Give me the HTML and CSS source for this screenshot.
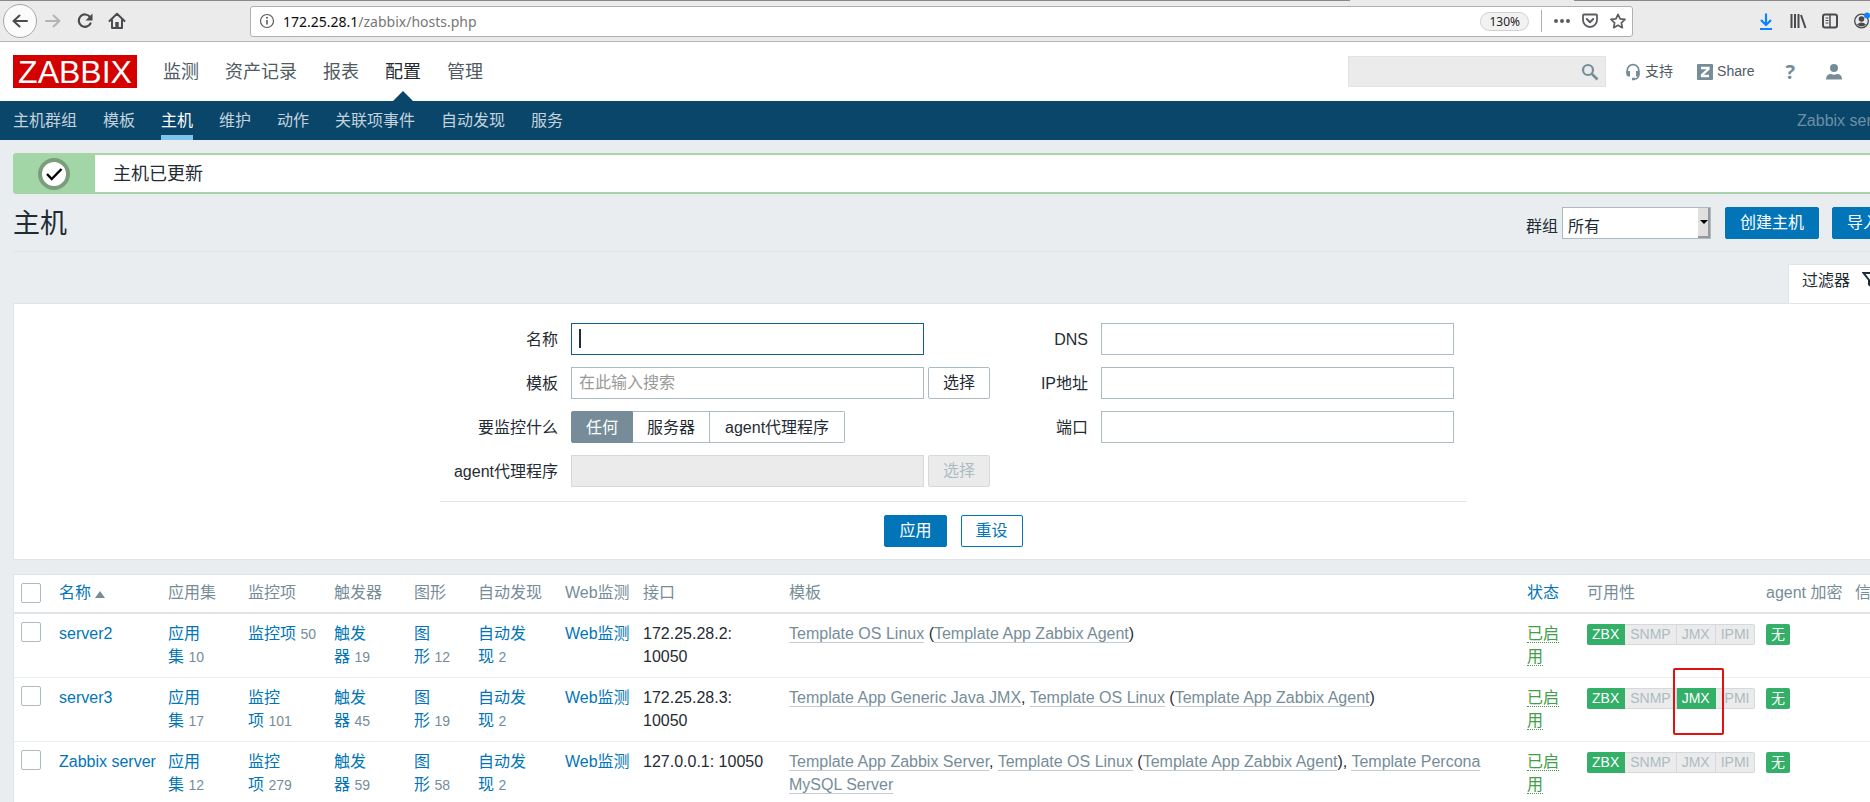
FILE: index.html
```html
<!DOCTYPE html>
<html lang="zh-CN">
<head>
<meta charset="utf-8">
<title>主机</title>
<link rel="stylesheet" href="styles.css">
</head>
<body>
<div class="browser">
  <div class="tab-edge"><span class="edge-dark edge-left"></span><span class="edge-dark edge-right"></span></div>
  <div class="toolbar">
    <button class="tool back" aria-label="Back"><svg width="18" height="18" viewBox="0 0 18 18"><path d="M16 9H2.5M8.500 3.500 2.500 9l6 5.500" fill="none" stroke="#4a4a4f" stroke-width="2" stroke-linecap="round" stroke-linejoin="round"/></svg></button>
    <button class="tool" aria-label="Forward"><svg width="18" height="18" viewBox="0 0 18 18"><path d="M2 9h13.500M9.500 3.500 15.500 9l-6 5.500" fill="none" stroke="#b4b4b6" stroke-width="2" stroke-linecap="round" stroke-linejoin="round"/></svg></button>
    <button class="tool" aria-label="Reload"><svg width="18" height="18" viewBox="0 0 18 18"><path d="M14.500 11.500A6.200 6.200 0 1 1 14 5" fill="none" stroke="#4a4a4f" stroke-width="2.200" stroke-linecap="round"/><path d="M16.500 1.500v7h-7z" fill="#4a4a4f"/></svg></button>
    <button class="tool" aria-label="Home"><svg width="18" height="18" viewBox="0 0 18 18"><path d="M1.500 9 9 1.800 16.500 9M4 8v8h10V8" fill="none" stroke="#4a4a4f" stroke-width="2" stroke-linecap="round" stroke-linejoin="round"/><path d="M7.300 16v-6h3.400v6z" fill="#4a4a4f"/></svg></button>
    <div class="urlbar">
      <svg width="16" height="16" viewBox="0 0 16 16"><circle cx="8" cy="8" r="6.500" fill="none" stroke="#5c5c61" stroke-width="1.200"/><path d="M8 7v4.500" stroke="#5c5c61" stroke-width="1.600"/><circle cx="8" cy="4.700" r="1" fill="#5c5c61"/></svg>
      <span class="url"><b>172.25.28.1</b>/zabbix/hosts.php</span>
      <span class="zoom">130%</span>
      <span class="url-sep"></span>
      <svg width="16" height="16" viewBox="0 0 16 16"><g fill="#5c5c61"><circle cx="2" cy="8" r="2"/><circle cx="8" cy="8" r="2"/><circle cx="14" cy="8" r="2"/></g></svg>
      <svg width="16" height="16" viewBox="0 0 16 16"><path d="M2 1.500h12q1 0 1 1V7a7 7 0 0 1-14 0V2.500q0-1 1-1z" fill="none" stroke="#5c5c61" stroke-width="1.800"/><path d="m4.800 6 3.200 3.200L11.200 6" fill="none" stroke="#5c5c61" stroke-width="2" stroke-linecap="round" stroke-linejoin="round"/></svg>
      <svg width="16" height="16" viewBox="0 0 16 16"><path d="m8 1.300 2.100 4.500 4.900.6-3.600 3.400.9 4.900L8 12.300l-4.300 2.400.9-4.900L1 6.400l4.900-.6z" fill="none" stroke="#5c5c61" stroke-width="1.700" stroke-linejoin="round"/></svg>
    </div>
    <div class="browser-tools">
      <svg width="18" height="18" viewBox="0 0 18 18"><path d="M9 1.500v11M4 8l5 5 5-5M3 17h12" fill="none" stroke="#0a84ff" stroke-width="2.200" stroke-linejoin="round"/></svg>
      <svg width="18" height="18" viewBox="0 0 18 18"><path d="M2.500 2v14M6 2v14M9.500 2v14M12 3l4.500 13" fill="none" stroke="#4a4a4f" stroke-width="2"/></svg>
      <svg width="18" height="18" viewBox="0 0 18 18"><rect x="2" y="2.500" width="14" height="13" rx="2" fill="none" stroke="#4a4a4f" stroke-width="2"/><path d="M9 3v12" stroke="#4a4a4f" stroke-width="1.500"/><path d="M4.500 6h3M4.500 8.500h3M4.500 11h3" stroke="#4a4a4f"/></svg>
      <svg width="18" height="18" viewBox="0 0 18 18"><circle cx="8.500" cy="9" r="6.800" fill="none" stroke="#4a4a4f" stroke-width="1.300"/><circle cx="8.500" cy="7" r="2.800" fill="#4a4a4f"/><path d="M4 12.500q4.500-4 9 0-4.500 4-9 0z" fill="#4a4a4f"/><circle cx="14" cy="3.500" r="3" fill="#0a84ff"/></svg>
    </div>
  </div>
</div>
<div class="page">
  <header class="header">
    <a class="logo" href="#">ZABBIX</a>
    <nav class="main-nav">
      <a href="#">监测</a><a href="#">资产记录</a><a href="#">报表</a><a href="#" class="current">配置</a><a href="#">管理</a>
    </nav>
    <div class="header-tools">
      <form class="search"><input type="search" aria-label="搜索"><button type="button" aria-label="搜索"><svg width="18" height="18" viewBox="0 0 18 18"><circle cx="7" cy="7" r="5" fill="none" stroke="#768d99" stroke-width="2.200"/><path d="m11 11 5.500 5.500" stroke="#768d99" stroke-width="2.600"/></svg></button></form>
      <a class="support" href="#"><svg width="16" height="18" viewBox="0 0 16 18"><path d="M2.200 11V7.500a5.800 5.800 0 0 1 11.600 0V12q-.5 4-4.300 4" fill="none" stroke="#768d99" stroke-width="1.700"/><path d="M1.400 8H5v5.500H3.400q-2 0-2-2zM11 8h3.600v3.500q0 2-2 2H11zM7 14.800h3v2.400H7z" fill="#768d99"/></svg>支持</a>
      <a class="share" href="#"><svg width="16" height="16" viewBox="0 0 16 16"><rect width="16" height="16" rx="1" fill="#768d99"/><path d="M4 4h7.500v1L5 11v1h7" fill="none" stroke="#fff" stroke-width="2.300"/></svg>Share</a>
      <a class="help" href="#" aria-label="帮助">?</a>
      <a class="user" href="#" aria-label="用户"><svg width="16" height="18" viewBox="0 0 16 18"><circle cx="8" cy="4.900" r="4" fill="#768d99"/><path d="M0 16.500q0-5.500 5-5.500 3 1.300 6 0 5 0 5 5.500z" fill="#768d99"/></svg></a>
    </div>
  </header>
  <nav class="sub-nav">
    <a href="#">主机群组</a><a href="#">模板</a><a href="#" class="current">主机</a><a href="#">维护</a><a href="#">动作</a><a href="#">关联项事件</a><a href="#">自动发现</a><a href="#">服务</a>
    <span class="server-name">Zabbix server</span>
  </nav>
  <main>
    <div class="message">
      <span class="message-icon"><svg width="34" height="34" viewBox="0 0 34 34"><circle cx="17" cy="17" r="14" fill="#fff" stroke="#7a9d7c" stroke-width="4"/><path d="m10 17 4.700 5L24.500 12" fill="none" stroke="#000" stroke-width="2.400"/></svg></span>
      <span class="message-text">主机已更新</span>
    </div>
    <div class="title-bar">
      <h1>主机</h1>
      <label for="group">群组</label>
      <span class="select-box"><select id="group"><option>所有</option></select><span class="select-arrow"></span></span>
      <button class="btn primary">创建主机</button>
      <button class="btn primary">导入</button>
    </div>
    <div class="filter-tabs"><button class="filter-tab">过滤器<svg width="18" height="18" viewBox="0 0 18 18"><path d="M1.500 2h15L11 9v7.500l-4-3V9z" fill="none" stroke="#1f2c33" stroke-width="2"/></svg></button></div>
    <form class="filter">
      <div class="filter-body">
        <div class="fields">
          <label for="name">名称</label><div class="control"><input class="text focused" id="name" type="text"><span class="caret"></span></div>
          <label for="tpl">模板</label><div class="control"><input class="text" id="tpl" type="text" placeholder="在此输入搜索"><button type="button" class="btn plain">选择</button></div>
          <span class="label" id="mon">要监控什么</span>
          <div class="segments" role="radiogroup" aria-labelledby="mon">
            <label><input type="radio" name="m" checked>任何</label><label><input type="radio" name="m">服务器</label><label><input type="radio" name="m">agent代理程序</label>
          </div>
          <label for="proxy">agent代理程序</label><div class="control"><input class="text" id="proxy" type="text" disabled><button type="button" class="btn plain" disabled>选择</button></div>
        </div>
        <div class="fields fields-right">
          <label for="dns">DNS</label><input class="text" id="dns" type="text">
          <label for="ip">IP地址</label><input class="text" id="ip" type="text">
          <label for="port">端口</label><input class="text" id="port" type="text">
        </div>
      </div>
      <div class="filter-actions"><button type="button" class="btn primary">应用</button><button type="button" class="btn outline">重设</button></div>
    </form>
    <table class="hosts">
      <colgroup><col class="c-check"><col class="c-name"><col class="c-apps"><col class="c-items"><col class="c-trig"><col class="c-graph"><col class="c-disc"><col class="c-web"><col class="c-intf"><col><col class="c-status"><col class="c-avail"><col class="c-enc"><col class="c-info"></colgroup>
      <thead><tr>
        <th><input type="checkbox" aria-label="全选"></th><th><a href="#">名称 <span class="sort"></span></a></th><th>应用集</th><th>监控项</th><th>触发器</th><th>图形</th><th>自动发现</th><th>Web监测</th><th>接口</th><th>模板</th><th><a href="#">状态</a></th><th>可用性</th><th>agent 加密</th><th>信息</th>
      </tr></thead>
      <tbody>
        <tr>
          <td><input type="checkbox" aria-label="server2"></td><td class="nowrap"><a href="#">server2</a></td>
          <td><a href="#">应用集</a>&nbsp;<small>10</small></td><td><a href="#">监控项</a>&nbsp;<small>50</small></td><td><a href="#">触发器</a>&nbsp;<small>19</small></td><td><a href="#">图形</a>&nbsp;<small>12</small></td><td><a href="#">自动发现</a>&nbsp;<small>2</small></td><td class="nowrap"><a href="#">Web监测</a></td>
          <td>172.25.28.2: 10050</td>
          <td><a class="tpl" href="#">Template OS Linux</a> (<a class="tpl" href="#">Template App Zabbix Agent</a>)</td>
          <td><a class="enabled" href="#">已启用</a></td>
          <td><span class="avail"><span class="on">ZBX</span><span>SNMP</span><span>JMX</span><span>IPMI</span></span></td>
          <td><span class="enc">无</span></td><td></td>
        </tr>
        <tr>
          <td><input type="checkbox" aria-label="server3"></td><td class="nowrap"><a href="#">server3</a></td>
          <td><a href="#">应用集</a>&nbsp;<small>17</small></td><td><a href="#">监控项</a>&nbsp;<small>101</small></td><td><a href="#">触发器</a>&nbsp;<small>45</small></td><td><a href="#">图形</a>&nbsp;<small>19</small></td><td><a href="#">自动发现</a>&nbsp;<small>2</small></td><td class="nowrap"><a href="#">Web监测</a></td>
          <td>172.25.28.3: 10050</td>
          <td><a class="tpl" href="#">Template App Generic Java JMX</a>, <a class="tpl" href="#">Template OS Linux</a> (<a class="tpl" href="#">Template App Zabbix Agent</a>)</td>
          <td><a class="enabled" href="#">已启用</a></td>
          <td><span class="avail"><span class="on">ZBX</span><span>SNMP</span><span class="on marked">JMX<i class="mark"></i></span><span>IPMI</span></span></td>
          <td><span class="enc">无</span></td><td></td>
        </tr>
        <tr>
          <td><input type="checkbox" aria-label="Zabbix server"></td><td class="nowrap"><a href="#">Zabbix server</a></td>
          <td><a href="#">应用集</a>&nbsp;<small>12</small></td><td><a href="#">监控项</a>&nbsp;<small>279</small></td><td><a href="#">触发器</a>&nbsp;<small>59</small></td><td><a href="#">图形</a>&nbsp;<small>58</small></td><td><a href="#">自动发现</a>&nbsp;<small>2</small></td><td class="nowrap"><a href="#">Web监测</a></td>
          <td>127.0.0.1: 10050</td>
          <td><a class="tpl" href="#">Template App Zabbix Server</a>, <a class="tpl" href="#">Template OS Linux</a> (<a class="tpl" href="#">Template App Zabbix Agent</a>), <a class="tpl" href="#">Template Percona MySQL Server</a></td>
          <td><a class="enabled" href="#">已启用</a></td>
          <td><span class="avail"><span class="on">ZBX</span><span>SNMP</span><span>JMX</span><span>IPMI</span></span></td>
          <td><span class="enc">无</span></td><td></td>
        </tr>
      </tbody>
    </table>
  </main>
</div>
</body>
</html>
```
FILE: styles.css
```css
* { box-sizing: border-box; }
html { overflow: hidden; }
body {
  margin: 0;
  overflow: hidden;
  background: #e9edf0;
  color: #1f2c33;
  font: 16px/23px "Liberation Sans", "Noto Sans CJK SC", sans-serif;
}
a { color: #0275b8; text-decoration: none; }
button, input, select { font: inherit; color: inherit; }
svg { display: block; flex: none; }

/* Browser chrome */
.browser { background: #ebebeb; border-bottom: 1px solid #b4b4b4; }
.tab-edge { display: flex; justify-content: space-between; height: 1px; }
.edge-dark { background: #8c8689; }
.edge-left { width: 1350px; }
.edge-right { width: 296px; }
.toolbar { display: flex; align-items: center; height: 40px; padding-left: 3px; }
.tool {
  display: flex; align-items: center; justify-content: center;
  width: 32px; height: 34px; padding: 0; border: 0; background: none;
}
.tool.back { width: 34px; border: 1px solid #a8a8a8; border-radius: 50%; background: #fbfbfb; }
.urlbar {
  display: flex; flex: 1; align-items: center; gap: 12px;
  height: 31px; margin-left: 117px; padding: 0 6px 0 8px;
  border: 1px solid #b0b0b0; border-radius: 3px; background: #fff;
}
.url { flex: 1; margin-left: -4px; font: 14px "Noto Sans", sans-serif; color: #777; }
.url b { font-weight: 400; color: #0c0c0d; }
.zoom {
  padding: 0 8px; border: 1px solid #d0d0d0; border-radius: 11px;
  background: #f2f2f2; font: 12px/17px "Noto Sans", sans-serif; color: #222;
}
.url-sep { width: 1px; height: 22px; background: #b1b1b1; }
.browser-tools { display: flex; gap: 14px; flex: none; width: 237px; padding-left: 124px; }

/* The page is wider than the window at this zoom level */
.page { margin-right: -37px; }
.header { display: flex; align-items: center; height: 59px; padding: 0 65px 0 13px; background: #fff; }
.logo {
  width: 124px; height: 33px; background: #d40000; color: #fff;
  font-size: 32px; line-height: 34px; text-align: center;
}
.main-nav { display: flex; align-self: stretch; gap: 26px; margin-left: 26px; font-size: 18px; line-height: 61px; }
.main-nav a { height: 59px; color: #4f5b63; }
.main-nav .current { position: relative; color: #1f2c33; }
.main-nav .current::after {
  content: ""; position: absolute; left: 50%; bottom: 0; margin-left: -10px;
  border: 10px solid transparent; border-top: 0; border-bottom-color: #0a466a;
}
.header-tools { display: flex; align-items: center; margin-left: auto; font-size: 14px; }
.header-tools a { display: flex; align-items: center; gap: 4px; color: #4f5b63; }
.search { display: flex; align-items: center; width: 258px; height: 31px; border: 1px solid #dfe4e7; background: #ebebeb; }
.search input { flex: 1; min-width: 0; border: 0; background: none; outline: 0; }
.search button { padding: 0 6px; border: 0; background: none; }
.support { margin-left: 19px; }
.share { margin-left: 24px; }
.header-tools .help { margin-left: 31px; color: #768d99; font: bold 20px "Noto Sans", sans-serif; }
.user { margin-left: 31px; }
.sub-nav { display: flex; gap: 26px; height: 39px; padding: 0 13px; background: #0a466a; line-height: 39px; }
.sub-nav a { color: #c3d2dc; }
.sub-nav .current { border-bottom: 5px solid #7ec4ef; color: #fff; }
.server-name { margin-left: auto; color: #6c8fa5; }

main { padding: 13px; }
.message { display: flex; height: 41px; border: 2px solid #a8d3ab; border-left: 0; border-radius: 3px; background: #fff; }
.message-icon { display: flex; align-items: center; justify-content: center; width: 82px; background: #a3d6a7; }
.message-text { padding-left: 18px; font-size: 18px; line-height: 39px; }

.title-bar { display: flex; align-items: center; height: 58px; padding-top: 1px; border-bottom: 1px solid #dfe4e7; }
h1 { margin: 0 auto 0 0; padding-top: 2px; font-size: 27px; font-weight: 400; line-height: 34px; }
.title-bar label { padding-top: 6px; }
.title-bar .select-box { position: relative; margin: 0 14px 0 4px; }
.select-box select {
  display: block; width: 149px; height: 32px; padding: 6px 5px 0; border: 1px solid #acbbc2;
  border-radius: 0; background: #fff; appearance: none;
}
.select-arrow {
  position: absolute; top: 1px; right: 1px; bottom: 1px; width: 12px;
  border-right: 2px solid #999; border-bottom: 2px solid #999; background: #e0e0e0; pointer-events: none;
}
.select-arrow::after { content: ""; position: absolute; top: 12px; left: 2px; border: 4px solid transparent; border-top-color: #000; border-bottom: 0; }
.btn { height: 32px; padding: 0 14px; border: 1px solid #0275b8; border-radius: 2px; line-height: 30px; white-space: nowrap; }
.primary { background: #0275b8; color: #fff; }
.title-bar .btn + .btn { margin-left: 13px; }
.outline { background: #fff; color: #0275b8; }
.plain { border-color: #acbbc2; background: #fff; }
.plain:disabled { border-color: #d3d9dc; background: #ebebeb; color: #acbbc2; }

.filter-tabs { display: flex; justify-content: flex-end; margin-top: 12px; }
.filter-tab {
  display: flex; align-items: center; gap: 12px; height: 39px; padding: 0 13px 8px;
  border: 1px solid #dfe4e7; border-bottom: 0; background: #fff;
}
.filter { border: 1px solid #dfe4e7; background: #fff; padding: 19px 0 12px; }
.filter-body, .filter-actions { width: 1027px; margin: 0 auto; padding: 0 13px; }
.filter-body { display: flex; justify-content: space-between; align-items: flex-start; border-bottom: 1px solid #dfe4e7; padding-bottom: 12px; }
.fields { display: grid; grid-template-columns: 105px auto; gap: 10px 13px; align-items: start; line-height: 34px; text-align: right; white-space: nowrap; }
.fields-right { grid-template-columns: 56px auto; }
.control { position: relative; display: flex; gap: 4px; }
.text { width: 353px; height: 32px; padding: 0 7px; border: 1px solid #acbbc2; background: #fff; outline: 0; }
.text::placeholder { color: #999; opacity: 1; }
.text.focused { border-color: #0f5f8f; }
.text:disabled { border-color: #d3d9dc; background: #ebebeb; }
.caret { position: absolute; left: 8px; top: 6px; width: 2px; height: 19px; background: #1f2c33; }
.segments { display: flex; justify-self: start; height: 32px; line-height: 32px; }
.segments label { height: 32px; padding: 0 14px; border: 1px solid #acbbc2; }
.segments label + label { border-left: 0; }
.segments label:first-child { border-radius: 2px 0 0 2px; }
.segments label:last-child { border-radius: 0 2px 2px 0; padding: 0 15px; }
.segments label:has(:checked) { border-color: #768d99; background: #768d99; color: #fff; }
.segments input { position: absolute; opacity: 0; }
.filter-actions { display: flex; justify-content: center; gap: 14px; padding-top: 13px; }

/* Host list */
.hosts { width: 100%; margin-top: 14px; border: 1px solid #dfe4e7; background: #fff; border-collapse: separate; border-spacing: 0; table-layout: fixed; }
.c-check { width: 38px; } .c-name { width: 109px; } .c-apps { width: 80px; } .c-items { width: 86px; }
.c-trig { width: 80px; } .c-graph { width: 64px; } .c-disc { width: 87px; } .c-web { width: 78px; }
.c-intf { width: 146px; } .c-status { width: 60px; } .c-avail { width: 179px; } .c-enc { width: 89px; } .c-info { width: 45px; }
th, td { padding: 8px 7px 9px; text-align: left; vertical-align: top; font-weight: 400; }
th { padding: 6px 7px 8px; border-bottom: 2px solid #dfe4e7; color: #768d99; white-space: nowrap; }
td { border-bottom: 1px solid #ebeef0; }
.nowrap { white-space: nowrap; }
.hosts input { appearance: none; display: block; width: 20px; height: 20px; margin: 0; border: 1px solid #acbbc2; border-radius: 2px; background: #fff; }
.hosts th:first-child { padding-top: 8px; }
.sort { display: inline-block; border: 5px solid transparent; border-top: 0; border-bottom: 7px solid #768d99; }
small { font-size: 14px; line-height: 20px; color: #768d99; }
.tpl { color: #768d99; border-bottom: 1px solid #c3ccd1; }
.enabled { color: #429e47; border-bottom: 1px dotted #429e47; }
.avail { display: inline-flex; font-size: 14px; line-height: 19px; color: #acbbc2; }
.avail span { padding: 0 5px; border: 1px solid #d3d9dc; border-left: 0; background: #ebebeb; }
.avail span:first-child { border-radius: 2px 0 0 2px; }
.avail span:last-child { border-radius: 0 2px 2px 0; }
.avail .on { border-color: #34af67; background: #34af67; color: #fff; }
.avail .marked { position: relative; }
.mark { position: absolute; z-index: 1; top: -21px; left: -4px; width: 51px; height: 67px; border: 2px solid #e31010; border-radius: 2px; }
.enc { display: inline-block; padding: 0 5px; border-radius: 2px; background: #34af67; color: #fff; font-size: 14px; line-height: 21px; }
```
